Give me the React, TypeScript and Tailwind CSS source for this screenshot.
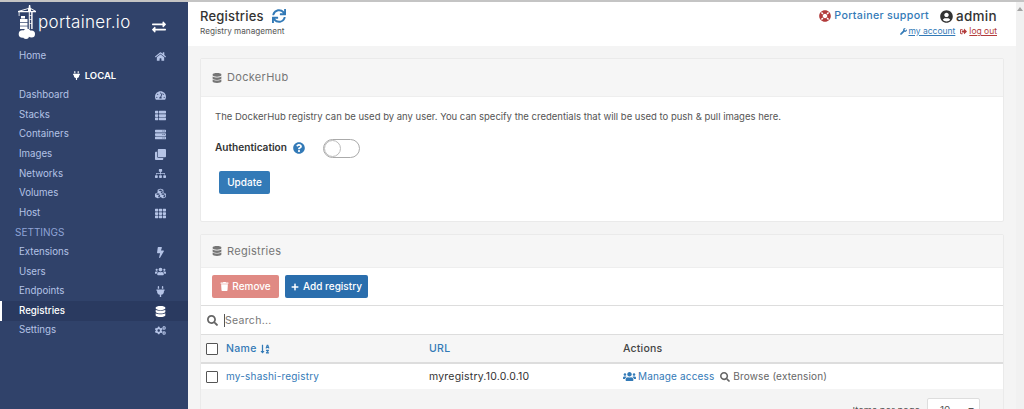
import type { ComponentType } from 'react'
import {
  FaBolt, FaClone, FaCogs, FaCubes, FaDatabase, FaExchangeAlt, FaHome, FaLifeRing, FaPlug, FaPlus,
  FaQuestionCircle, FaSearch, FaServer, FaSignOutAlt, FaSitemap, FaSortAlphaDown, FaSync, FaTachometerAlt,
  FaTh, FaThList, FaTrash, FaUserCircle, FaUsers, FaWrench,
} from 'react-icons/fa'

type NavItem = { label: string; icon: ComponentType<{ className?: string }>; active?: boolean }

const topItems: NavItem[] = [
  { label: 'Dashboard', icon: FaTachometerAlt },
  { label: 'Stacks', icon: FaThList },
  { label: 'Containers', icon: FaServer },
  { label: 'Images', icon: FaClone },
  { label: 'Networks', icon: FaSitemap },
  { label: 'Volumes', icon: FaCubes },
  { label: 'Host', icon: FaTh },
]

const settingsItems: NavItem[] = [
  { label: 'Extensions', icon: FaBolt },
  { label: 'Users', icon: FaUsers },
  { label: 'Endpoints', icon: FaPlug },
  { label: 'Registries', icon: FaDatabase, active: true },
  { label: 'Settings', icon: FaCogs },
]

function NavRow({ label, icon: Icon, active }: NavItem) {
  return (
    <div className={`flex h-[19.6px] items-center justify-between pl-[19px] pr-[22px] text-[9.700px] ${active ? 'bg-[#2a3a60] text-white font-medium' : 'text-[#b4c3e6]'}`}>
      <span>{label}</span>
      <Icon className={`w-[11px] h-[11px] ${active ? 'text-white' : 'text-[#b4c3e6]'}`} />
    </div>
  )
}

function Logo() {
  return (
    <svg viewBox="0 0 18 34" className="w-[18px] h-[34px] text-white" fill="currentColor">
      <path d="M11 0h1.200l.5 3 5.300 3v1.200H0V6l.8-.3L10.500 3zM10 4L3.500 6H10zM13 4.200V6h3.200z" />
      <rect x="0.700" y="7" width="0.800" height="4" />
      <rect x="10.800" y="7" width="1" height="17" />
      <rect x="13.200" y="7" width="1.400" height="17" />
      <rect x="11" y="10" width="3" height="0.700" />
      <rect x="11" y="14" width="3" height="0.700" />
      <rect x="11" y="18" width="3" height="0.700" />
      <rect x="3" y="11" width="4" height="2.500" />
      <rect x="2" y="14" width="7.500" height="3" />
      <rect x="2" y="17.700" width="7.500" height="3" />
      <rect x="2" y="21.400" width="7.500" height="2.600" />
      <circle cx="4.500" cy="29" r="3.800" />
      <circle cx="9" cy="27.500" r="3.800" />
      <circle cx="13.500" cy="29" r="3.500" />
      <circle cx="8" cy="31" r="3" />
    </svg>
  )
}

function Sidebar() {
  return (
    <aside className="w-[188px] shrink-0 bg-[#30426a] font-['Inter',sans-serif]">
      <div className="flex h-[44.500px] items-start pl-[18px] pr-[22px] pt-[3px]">
        <Logo />
        <span className="ml-[2px] mt-[5px] text-[17px] font-light tracking-[0.3px] leading-[24px] text-white">portainer.io</span>
        <FaExchangeAlt className="ml-auto mt-[15px] w-[14px] h-[14px] text-white" />
      </div>
      <div className="flex h-[19.6px] items-center justify-between pl-[19px] pr-[22px] text-[9.700px] text-[#b4c3e6]">
        <span>Home</span>
        <FaHome className="w-[11px] h-[11px]" />
      </div>
      <div className="flex h-[19.6px] items-center justify-center gap-1 text-[9.500px] font-semibold text-white">
        <FaPlug className="w-[9px] h-[9px]" />
        <span>LOCAL</span>
      </div>
      {topItems.map(item => <NavRow key={item.label} {...item} />)}
      <div className="flex h-[19.6px] items-center pl-[15px] text-[10px] text-[#8fa4d6]">SETTINGS</div>
      {settingsItems.map(item => (
        <div key={item.label} className="relative">
          {item.active && <span className="absolute left-0 top-0 h-full w-[2px] bg-white" />}
          <NavRow {...item} />
        </div>
      ))}
    </aside>
  )
}

function PageHeader() {
  return (
    <header className="flex h-[44px] shrink-0 justify-between bg-white pl-[12px] pr-[19px] pt-[5px]">
      <div>
        <div className="flex items-center gap-[8px]">
          <span className="text-[13px] font-medium leading-[18px] tracking-[0.2px] text-[#333]">Registries</span>
          <FaSync className="w-[14px] h-[14px] text-[#337ab7]" />
        </div>
        <div className="text-[8.200px] leading-[12px] text-[#555]">Registry management</div>
      </div>
      <div className="flex flex-col items-end">
        <div className="flex items-center text-[10.700px] leading-[18px]">
          <FaLifeRing className="w-[12px] h-[12px] text-[#b23b3b]" />
          <span className="ml-[3px] font-medium tracking-[0.3px] text-[#337ab7]">Portainer support</span>
          <FaUserCircle className="ml-[11px] w-[13px] h-[13px] text-[#333]" />
          <span className="ml-[3px] text-[13.500px] font-medium tracking-[0.3px] text-[#333]">admin</span>
        </div>
        <div className="flex items-center text-[8.500px] leading-[12px]">
          <FaWrench className="w-[7px] h-[7px] text-[#337ab7]" />
          <span className="ml-[1px] text-[#337ab7] underline">my account</span>
          <FaSignOutAlt className="ml-[5px] w-[7px] h-[7px] text-[#b23b3b]" />
          <span className="ml-[2px] text-[#b23b3b] underline">log out</span>
        </div>
      </div>
    </header>
  )
}

function CardTitle({ title, className }: { title: string; className: string }) {
  return (
    <div className={`flex items-center gap-[5px] border-b border-[#eeeeee] bg-[#f6f6f6] pl-[11px] text-[11px] tracking-[0.3px] text-[#767676] ${className}`}>
      <FaDatabase className="w-[10px] h-[10px]" />
      <span>{title}</span>
    </div>
  )
}

function Checkbox() {
  return <span className="block h-[12px] w-[12px] rounded-[1px] border-[1.500px] border-[#555] bg-white" />
}

export default function App() {
  return (
    <div className="flex h-[409px] w-[1024px] overflow-hidden border-t-2 border-[#c4c4c4] bg-[#f4f4f4] font-['Inter',sans-serif]">
      <Sidebar />
      <main className="flex w-[828px] flex-col">
        <PageHeader />
        <div className="flex-1 pl-[12px] pr-[12px] pt-[12px]">
          <section className="h-[164px] rounded-[2px] border border-[#eaeaea] bg-white">
            <CardTitle title="DockerHub" className="h-[38px]" />
            <p className="pl-[14px] pt-[13px] text-[9.500px] leading-[14px] text-[#555]">
              The DockerHub registry can be used by any user. You can specify the credentials that will be used to push &amp; pull images here.
            </p>
            <div className="mt-[14px] flex h-[20px] items-center pl-[14px]">
              <span className="text-[10.100px] font-semibold text-[#333]">Authentication</span>
              <FaQuestionCircle className="ml-[6px] w-[12px] h-[12px] text-[#337ab7]" />
              <span className="relative ml-[18px] block h-[19px] w-[37px] rounded-full border border-[#aaa] bg-white">
                <span className="absolute left-0 top-0 h-[17px] w-[17px] rounded-full border border-[#bbb] bg-white" />
              </span>
            </div>
            <button className="ml-[18px] mt-[13px] block h-[23px] w-[51px] rounded-[2px] bg-[#337ab7] text-[10px] font-medium text-white">Update</button>
          </section>
          <section className="mt-[12px] rounded-[2px] border border-[#eaeaea] bg-white">
            <CardTitle title="Registries" className="h-[33px]" />
            <div className="flex h-[38px] items-center gap-[6px] border-b border-[#dddddd] pl-[11px]">
              <button className="flex h-[23px] w-[67px] items-center justify-center gap-[3px] rounded-[2px] bg-[#e08a84] text-[10px] font-medium text-white">
                <FaTrash className="w-[9px] h-[9px]" />
                Remove
              </button>
              <button className="flex h-[23px] w-[83px] items-center justify-center gap-[4px] rounded-[2px] bg-[#2a6ead] text-[10px] font-medium text-white">
                <FaPlus className="w-[8px] h-[8px]" />
                Add registry
              </button>
            </div>
            <div className="flex h-[29px] items-center border-b border-[#dddddd] pl-[6px] text-[10.500px] tracking-[0.3px] text-[#777]">
              <FaSearch className="w-[11px] h-[11px] text-[#666]" />
              <span className="ml-[6px] border-l border-[#555] leading-[13px]">Search...</span>
            </div>
            <div className="grid h-[29px] grid-cols-[223px_199px_1fr] items-center border-b-2 border-[#dddddd] bg-[#f6f6f6] text-[10.500px]">
              <div className="flex items-center pl-[5px]">
                <Checkbox />
                <span className="ml-[8px] font-medium tracking-[0.3px] text-[#337ab7]">Name</span>
                <FaSortAlphaDown className="ml-[3px] w-[10px] h-[10px] text-[#337ab7]" />
              </div>
              <span className="pl-[5px] font-medium tracking-[0.3px] text-[#337ab7]">URL</span>
              <span className="font-medium tracking-[0.2px] text-[#444]">Actions</span>
            </div>
            <div className="grid h-[25px] grid-cols-[223px_199px_1fr] items-center text-[10px]">
              <div className="flex items-center pl-[5px]">
                <Checkbox />
                <span className="ml-[8px] tracking-[0.2px] text-[#337ab7]">my-shashi-registry</span>
              </div>
              <span className="pl-[5px] text-[10.500px] tracking-[0.2px] text-[#333]">myregistry.10.0.0.10</span>
              <div className="flex items-center tracking-[0.15px]">
                <FaUsers className="w-[13px] h-[13px] text-[#337ab7]" />
                <span className="ml-[2px] text-[#337ab7]">Manage access</span>
                <FaSearch className="ml-[6px] w-[10px] h-[10px] text-[#666]" />
                <span className="ml-[3px] text-[#666]">Browse (extension)</span>
              </div>
            </div>
            <div className="flex h-[40px] items-start justify-end bg-[#f4f4f4] pr-[23px] pt-[9px] text-[9.500px] text-[#555]">
              <span className="pt-[6px]">Items per page</span>
              <span className="ml-[7px] flex h-[24px] w-[53px] items-center justify-between rounded-[2px] border border-[#ddd] bg-white pl-[12px] pr-[5px] text-[10px]">
                10
                <span className="text-[6px]">▼</span>
              </span>
            </div>
          </section>
        </div>
      </main>
      <div className="relative w-[8px] shrink-0 bg-[#f1f1f1]">
        <span className="absolute left-[1px] top-[5px] border-x-[3px] border-b-[4px] border-x-transparent border-b-[#a3a3a3]" />
      </div>
    </div>
  )
}
